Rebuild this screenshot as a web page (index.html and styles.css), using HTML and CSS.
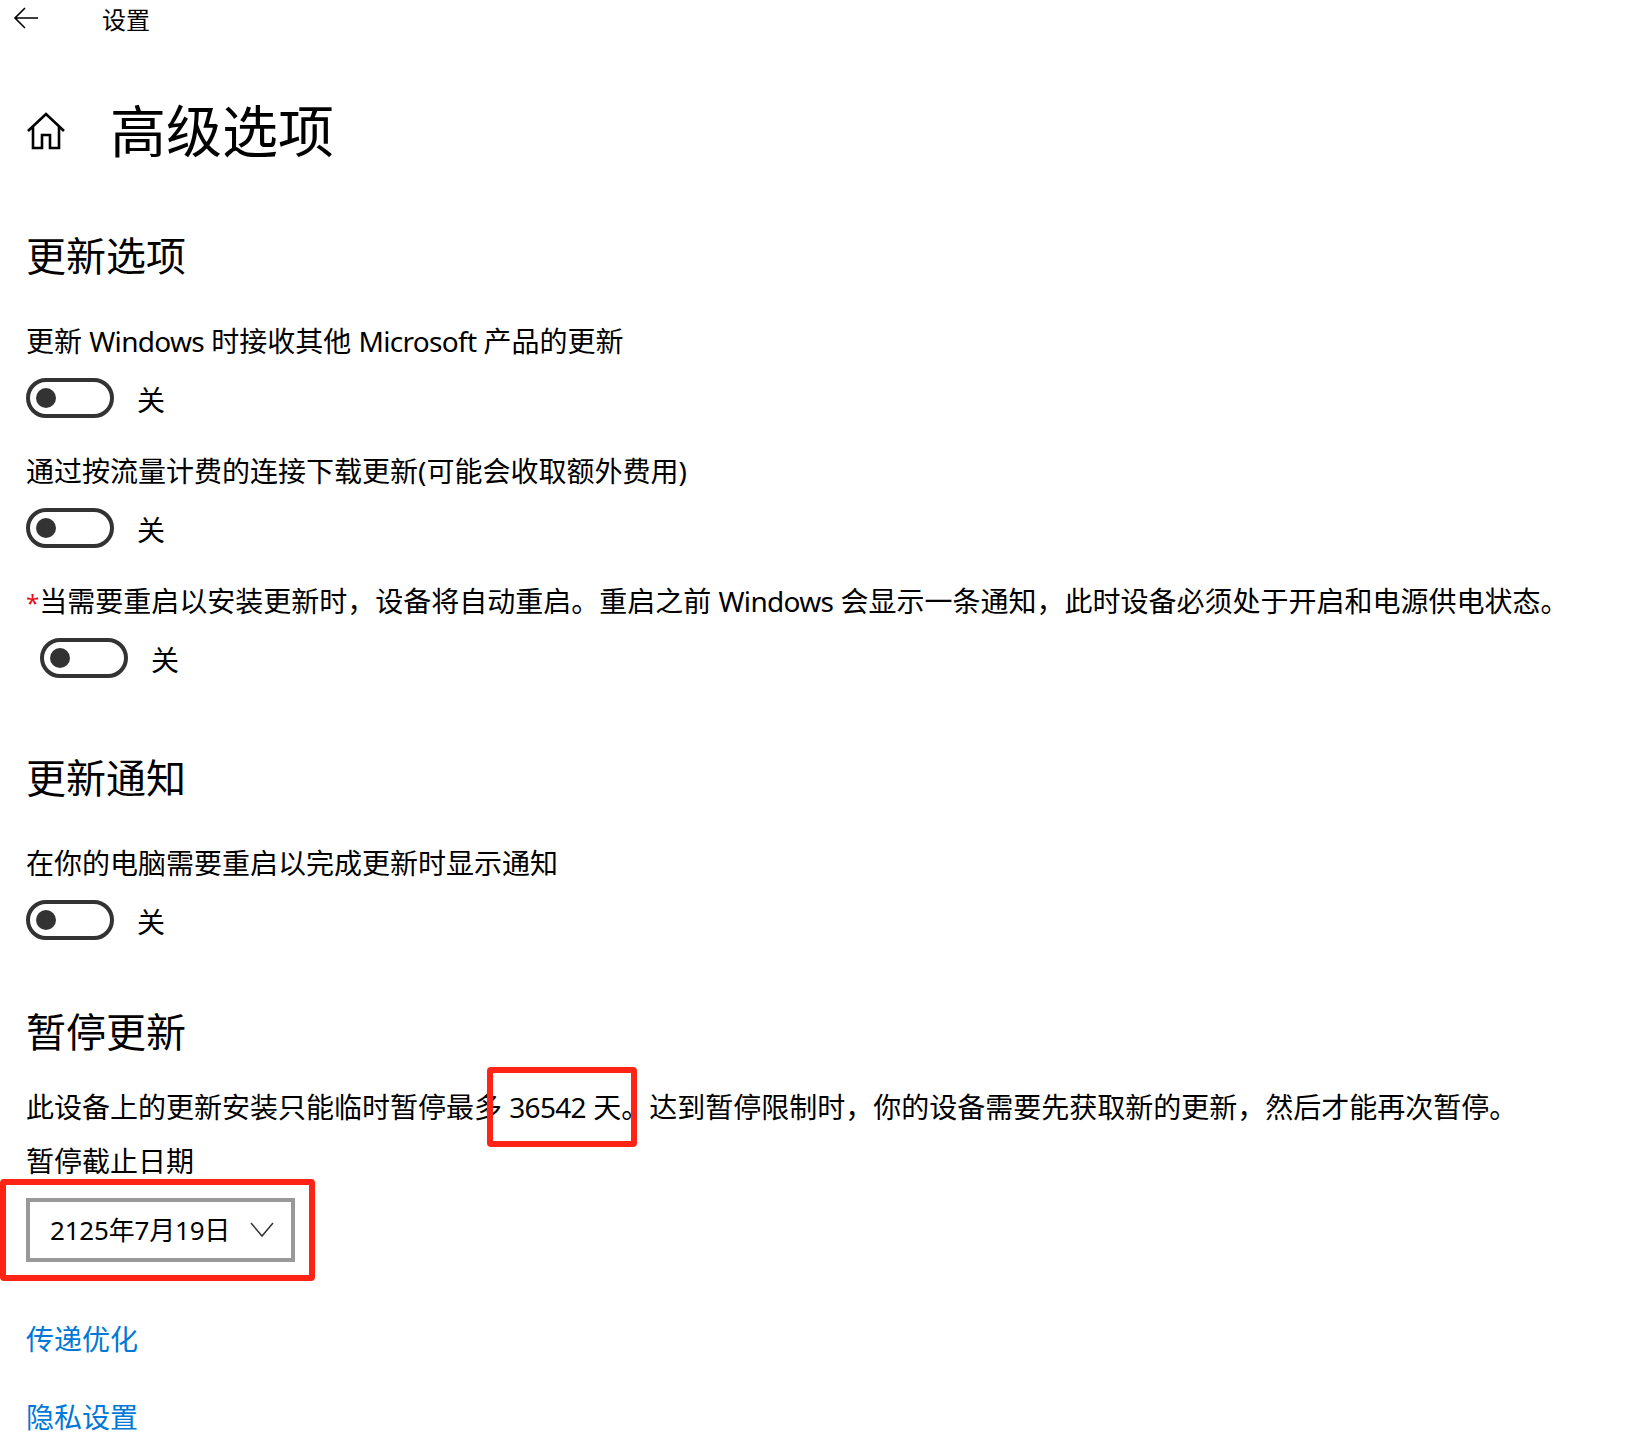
FILE: index.html
```html
<!DOCTYPE html>
<html lang="zh-CN">
<head>
    <meta charset="UTF-8">
    <title>设置</title>
    <link rel="stylesheet" href="styles.css">
</head>
<body>

<div class="header">
    <svg class="back-icon" width="26" height="26" viewBox="0 0 26 26"><path d="M25 13H2M12 3 2 13l10 10" fill="none" stroke="#000" stroke-width="1.6"/></svg>
    <span class="header-title">设置</span>
</div>

<div class="title-row">
    <svg class="home-icon" width="38" height="38" viewBox="0 0 38 38"><path d="M1 19 19 2l18 17M6 15v21h9V23h8v13h9V15" fill="none" stroke="#000" stroke-width="2.6"/></svg>
    <h1 class="page-title">高级选项</h1>
</div>

<!-- Update options -->
<h2 class="section-title first">更新选项</h2>
<div class="label first-label">更新 <span class="latin">Windows</span> 时接收其他 <span class="latin">Microsoft</span> 产品的更新</div>
<div class="toggle-row">
    <span class="toggle"><span class="knob"></span></span>
    <span class="toggle-text">关</span>
</div>
<div class="label">通过按流量计费的连接下载更新(可能会收取额外费用)</div>
<div class="toggle-row">
    <span class="toggle"><span class="knob"></span></span>
    <span class="toggle-text">关</span>
</div>
<div class="label"><span class="star">*</span>当需要重启以安装更新时，设备将自动重启。重启之前 <span class="latin">Windows</span> 会显示一条通知，此时设备必须处于开启和电源供电状态。</div>
<div class="toggle-row indented">
    <span class="toggle"><span class="knob"></span></span>
    <span class="toggle-text">关</span>
</div>

<!-- Update notifications -->
<h2 class="section-title second">更新通知</h2>
<div class="label first-label">在你的电脑需要重启以完成更新时显示通知</div>
<div class="toggle-row">
    <span class="toggle"><span class="knob"></span></span>
    <span class="toggle-text">关</span>
</div>

<!-- Pause updates -->
<h2 class="section-title third">暂停更新</h2>
<div class="label pause-text">此设备上的更新安装只能临时暂停最多 <span class="marked"><span class="latin">36542</span> 天。<span class="red-box days-box"></span></span>达到暂停限制时，你的设备需要先获取新的更新，然后才能再次暂停。</div>
<div class="label date-label">暂停截止日期</div>
<div class="select-wrap">
    <div class="select-box">
        <span class="select-text">2125年7月19日</span>
        <svg width="24" height="16" viewBox="0 0 24 16"><path d="M1 1l11 13L23 1" fill="none" stroke="#333" stroke-width="1.5"/></svg>
    </div>
    <div class="red-box date-box"></div>
</div>

<a class="link first-link" href="#">传递优化</a>
<a class="link" href="#">隐私设置</a>

</body>
</html>
```

FILE: styles.css
```css
html, body {
    height: 100%;
    overflow: hidden;
}
body {
    margin: 0;
    padding-left: 26px;
    box-sizing: border-box;
    background-color: #fff;
    color: #000;
    font-family: "Noto Sans", "Noto Sans CJK SC", sans-serif;
    font-size: 28px;
    line-height: 40px;
}
.header {
    display: flex;
    align-items: center;
    height: 40px;
    margin-left: -13px;
}
.back-icon {
    margin-top: -4px;
}
.header-title {
    margin-left: 63px;
    font-size: 24px;
}
.title-row {
    display: flex;
    align-items: center;
    height: 80px;
    margin-top: 50px;
}
.home-icon {
    margin-left: 1px;
    margin-top: 1px;
}
.page-title {
    margin: 0 0 0 45px;
    font-size: 56px;
    font-weight: 400;
    line-height: 80px;
}
.section-title {
    margin: 0;
    font-size: 40px;
    font-weight: 400;
    line-height: 56px;
}
.section-title.first {
    margin-top: 58px;
}
.section-title.second {
    margin-top: 72px;
}
.section-title.third {
    margin-top: 64px;
}
.label {
    height: 40px;
    margin-top: 33px;
    white-space: nowrap;
}
.label.first-label {
    margin-top: 37px;
}
.latin {
    letter-spacing: -0.7px;
}
.star {
    color: #e81123;
    font-size: 24px;
}
.toggle-row {
    display: flex;
    align-items: center;
    height: 40px;
    margin-top: 17px;
}
.toggle-row.indented {
    margin-left: 14px;
}
.toggle {
    display: flex;
    align-items: center;
    box-sizing: border-box;
    width: 88px;
    height: 40px;
    padding-left: 6px;
    border: 4px solid #333;
    border-radius: 20px;
}
.knob {
    width: 20px;
    height: 20px;
    border-radius: 50%;
    background-color: #333;
}
.toggle-text {
    margin-left: 23px;
    padding-top: 4px;
}
.pause-text {
    margin-top: 27px;
}
.marked {
    position: relative;
}
.red-box {
    position: absolute;
    box-sizing: border-box;
    border: 6px solid #ff2416;
    border-radius: 4px;
}
.days-box {
    left: -22px;
    top: -21px;
    width: 150px;
    height: 80px;
}
.date-label {
    margin-top: 14px;
}
.select-wrap {
    position: relative;
    width: 269px;
    margin-top: 17px;
}
.select-box {
    display: flex;
    align-items: center;
    justify-content: space-between;
    box-sizing: border-box;
    height: 64px;
    padding: 0 17px 0 20px;
    border: 4px solid #999;
}
.select-text {
    margin-top: -1px;
    font-size: 26px;
    letter-spacing: -0.2px;
}
.date-box {
    left: -26px;
    top: -19px;
    width: 315px;
    height: 102px;
}
.link {
    display: block;
    width: max-content;
    margin-top: 38px;
    color: #0078d7;
    text-decoration: none;
}
.link.first-link {
    margin-top: 57px;
}
```
